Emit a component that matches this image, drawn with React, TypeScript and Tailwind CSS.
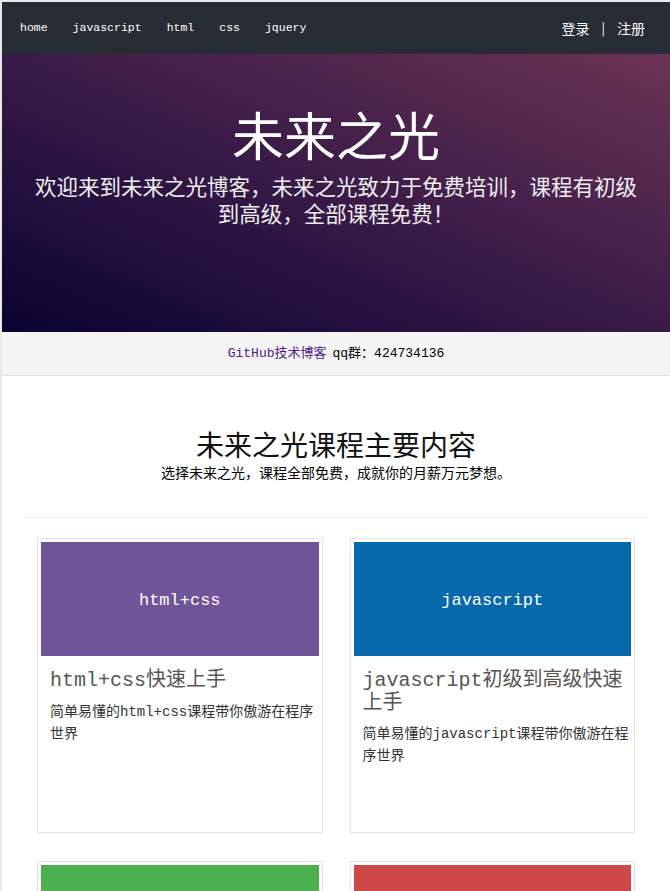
import React from "react";

const mono = "font-['Liberation_Mono','Noto_Sans_CJK_SC',monospace]";
const cjk = "font-['Noto_Sans_CJK_SC',sans-serif]";

const courses = [
    {
        tag: "html+css",
        color: "bg-[#6f5499]",
        title: "html+css快速上手",
        desc: "简单易懂的html+css课程带你傲游在程序世界",
    },
    {
        tag: "javascript",
        color: "bg-[#0868ac]",
        title: "javascript初级到高级快速上手",
        desc: "简单易懂的javascript课程带你傲游在程序世界",
    },
    {
        tag: "html5",
        color: "bg-[#4caf50]",
        title: "html5新特性",
        desc: "简单易懂的html5课程带你傲游在程序世界",
    },
    {
        tag: "jquery",
        color: "bg-[#cf4848]",
        title: "jquery快速上手",
        desc: "简单易懂的jquery课程带你傲游在程序世界",
    },
];

const App: React.FC = () => {
    return (
        <div className="min-h-screen bg-white border-l-2 border-t-2 border-[#e8e8e8]">
            {/* Nav */}
            <nav className="h-[52px] bg-[#282c35] flex items-center justify-between pl-[18px] pr-[25px] text-white">
                <ul className={`flex gap-[25px] text-[11.5px] ${mono}`}>
                    <li>home</li>
                    <li>javascript</li>
                    <li>html</li>
                    <li>css</li>
                    <li>jquery</li>
                </ul>
                <div className={`flex items-center text-[14px] ${cjk}`}>
                    <span>登录</span>
                    <span className="mx-[12px] text-[13px]">|</span>
                    <span>注册</span>
                </div>
            </nav>

            {/* Hero */}
            <header className="h-[278px] bg-gradient-to-tr from-[#0a0331] via-[#3a1a48] to-[#6c3352] pt-[50px] px-[26px] text-center text-white">
                <h1 className={`text-[52px] leading-[60px] ${cjk}`}>未来之光</h1>
                <p className={`mt-[8px] text-[21.5px] leading-[27px] text-[#eee] ${cjk}`}>
                    欢迎来到未来之光博客，未来之光致力于免费培训，课程有初级到高级，全部课程免费！
                </p>
            </header>

            {/* Info bar */}
            <div className={`h-[44px] bg-[#f4f4f4] border-b border-[#e0e0e0] flex items-center justify-center text-[13px] ${mono}`}>
                <a href="#" className="text-[#551a8b]">GitHub技术博客</a>
                <span className="ml-[6px] text-black">qq群：424734136</span>
            </div>

            {/* Courses */}
            <section className="px-[22px] pt-[50px]">
                <div className="text-center">
                    <h2 className={`text-[28px] leading-[36px] text-[#111] ${cjk}`}>未来之光课程主要内容</h2>
                    <p className={`text-[14px] leading-[20px] text-black ${cjk}`}>
                        选择未来之光，课程全部免费，成就你的月薪万元梦想。
                    </p>
                </div>
                <hr className="mt-[35px] border-t border-[#eee]" />

                <div className="grid grid-cols-2 gap-x-[27px] gap-y-[28px] px-[13px] pt-[20px] pb-[30px]">
                    {courses.map((c) => (
                        <div key={c.tag} className="h-[295px] border border-[#e2e2e2] p-[3px]">
                            <div
                                className={`h-[114px] ${c.color} flex items-center justify-center pt-[4px] text-white text-[17px] ${mono}`}
                            >
                                {c.tag}
                            </div>
                            <div className="pl-[9px]">
                                <h3 className={`mt-[14px] text-[20px] leading-[22.5px] text-[#555] ${mono}`}>
                                    {c.title}
                                </h3>
                                <p className={`mt-[8px] text-[14px] leading-[22px] text-[#333] ${mono}`}>
                                    {c.desc}
                                </p>
                            </div>
                        </div>
                    ))}
                </div>
            </section>
        </div>
    );
};

export default App;
